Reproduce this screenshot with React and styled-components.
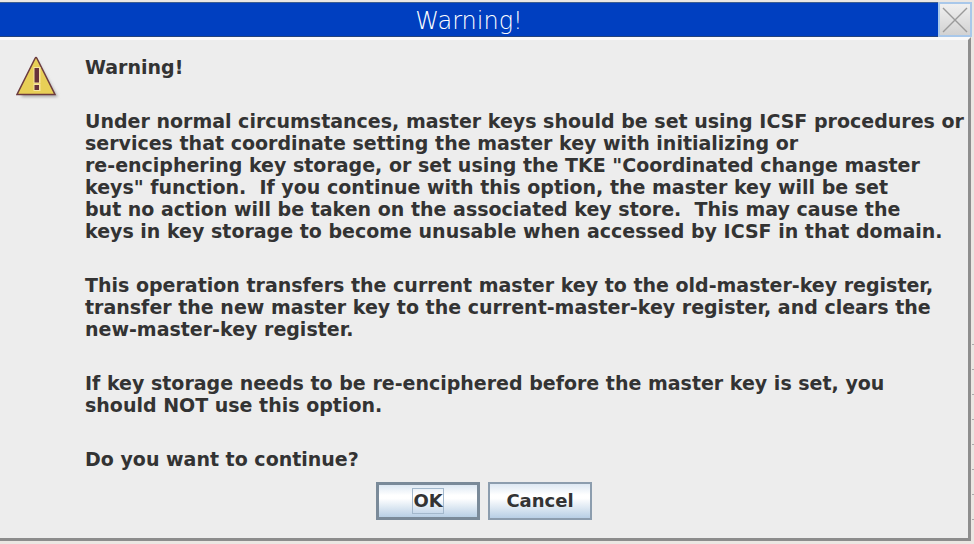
import React from "react";
import styled, { createGlobalStyle } from "styled-components";

const GlobalStyle = createGlobalStyle`
  * { box-sizing: border-box; }
  html, body, #root { height: 100%; }
  body {
    margin: 0;
    background: #ebe7e3;
    font-family: "DejaVu Sans", sans-serif;
    color: #333;
  }
`;

const Desktop = styled.div`
  min-height: 100%;
  padding: 2px 2px 3px 0;
  display: flex;
  flex-direction: column;
  background:
    repeating-linear-gradient(to top, transparent 0 24px, #aaa 24px 25px) right bottom / 2px 200px no-repeat,
    #ebe7e3;
`;

const Dialog = styled.main`
  flex: 1;
  display: flex;
  flex-direction: column;
`;

const TitleBar = styled.header`
  height: 35px;
  flex: none;
  display: flex;
  align-items: stretch;
  background: #003fc0;
  border-top: 1px solid #3f5f90;
  border-bottom: 1px solid #24447c;
`;

const Title = styled.h1`
  flex: 1;
  margin: 0;
  padding-top: 2px;
  text-align: center;
  font-family: "DejaVu Sans Light", "DejaVu Sans", sans-serif;
  font-size: 24px;
  font-weight: 200;
  line-height: 32px;
  color: #fff;
`;

const CloseButton = styled.button`
  width: 34px;
  margin: -1px 0;
  padding: 0;
  border: 2px solid #a9c8ea;
  background: linear-gradient(#f0f0f0, #d2d2d2);
  display: grid;
  place-items: center;
`;

const Body = styled.section`
  flex: 1;
  display: flex;
  flex-direction: column;
  padding: 16px 0 16px 16px;
  margin-right: 1px;
  background: #ededed;
  border-top: 3px solid #fafafa;
  border-right: 3px solid #8e8e8e;
  border-bottom: 3px solid #8c8c8c;
`;

const Content = styled.div`
  display: flex;
  align-items: flex-start;
  gap: 24px;
`;

const Message = styled.div`
  flex: 1;
  display: flex;
  flex-direction: column;
  gap: 32px;
`;

const Paragraph = styled.p`
  margin: 0;
  font-size: 19px;
  font-weight: 700;
  line-height: 22px;
  white-space: pre;
`;

const Actions = styled.div`
  display: flex;
  justify-content: center;
  gap: 8px;
  margin-top: 12px;
  padding-right: 16px;
`;

const ActionButton = styled.button`
  width: 104px;
  height: 38px;
  padding: 0;
  border: ${(p) => (p.$primary ? "3px solid #7a8a99" : "2px solid #8c9dae")};
  background: linear-gradient(#dde8f3 0%, #ffffff 32%, #ffffff 42%, #b8cfe5 100%);
  color: #333;
  font: 700 18px/24px "DejaVu Sans", sans-serif;
`;

const FocusLabel = styled.span`
  display: inline-block;
  border: 1px solid #a3b8cc;
`;

const WarningIcon = () => (
  <svg width="45" height="46" viewBox="0 0 45 46" aria-hidden="true">
    <defs>
      <filter id="soft" x="-20%" y="-20%" width="150%" height="150%">
        <feGaussianBlur stdDeviation="1.5" />
      </filter>
    </defs>
    <path d="M22 5L42 41H5Z" fill="#aaa" filter="url(#soft)" />
    <path d="M19 2.5Q20 .5 21 2.5L39 38.5H1Z" fill="#e8cf57" stroke="#6b3a3f" strokeWidth="1.5" />
    <path d="M17.5 11h7v16.5h-7zM17.5 28h7v7h-7z" fill="#f7e5a0" />
    <path d="M18.5 12h4.5v14.5h-4.5zM18.5 29h4.5v5h-4.5z" fill="#67333b" />
  </svg>
);

const CloseIcon = () => (
  <svg width="28" height="28" viewBox="0 0 28 28" aria-hidden="true">
    <path d="M2 2L26 26M26 2L2 26" stroke="#9a9a9a" strokeWidth="1.4" />
  </svg>
);

const paragraphs = [
  ["Warning!"],
  [
    "Under normal circumstances, master keys should be set using ICSF procedures or",
    "services that coordinate setting the master key with initializing or",
    "re-enciphering key storage, or set using the TKE \"Coordinated change master",
    "keys\" function.  If you continue with this option, the master key will be set",
    "but no action will be taken on the associated key store.  This may cause the",
    "keys in key storage to become unusable when accessed by ICSF in that domain.",
  ],
  [
    "This operation transfers the current master key to the old-master-key register,",
    "transfer the new master key to the current-master-key register, and clears the",
    "new-master-key register.",
  ],
  [
    "If key storage needs to be re-enciphered before the master key is set, you",
    "should NOT use this option.",
  ],
  ["Do you want to continue?"],
];

export default function App() {
  return (
    <>
      <GlobalStyle />
      <Desktop>
        <Dialog role="alertdialog" aria-labelledby="dialog-title">
          <TitleBar>
            <Title id="dialog-title">Warning!</Title>
            <CloseButton type="button" aria-label="Close">
              <CloseIcon />
            </CloseButton>
          </TitleBar>
          <Body>
            <Content>
              <WarningIcon />
              <Message>
                {paragraphs.map((lines) => (
                  <Paragraph key={lines[0]}>{lines.join("\n")}</Paragraph>
                ))}
              </Message>
            </Content>
            <Actions>
              <ActionButton type="button" $primary>
                <FocusLabel>OK</FocusLabel>
              </ActionButton>
              <ActionButton type="button">Cancel</ActionButton>
            </Actions>
          </Body>
        </Dialog>
      </Desktop>
    </>
  );
}
